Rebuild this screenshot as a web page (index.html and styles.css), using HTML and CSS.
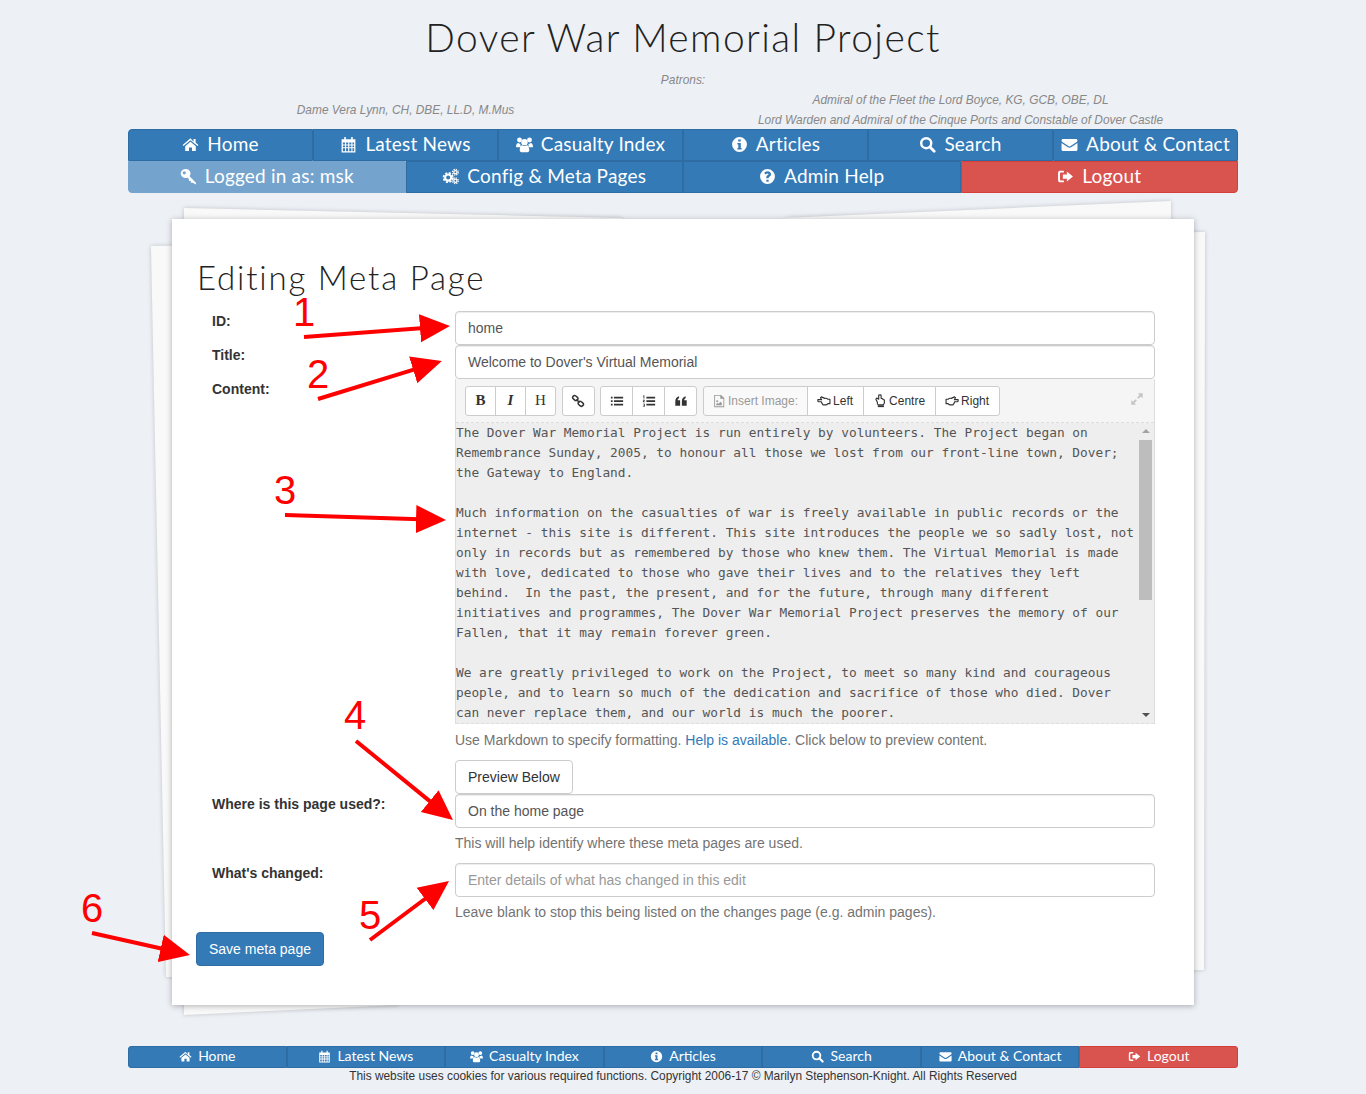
FILE: index.html
```html
<!DOCTYPE html>
<html lang="en">
<head>
    <meta charset="UTF-8">
    <meta name="viewport" content="width=device-width, initial-scale=1.0">
    <title>Dover War Memorial Project</title>
    <link rel="stylesheet" href="styles.css">
</head>
<body>
    <svg class="icon-defs" width="0" height="0">
        <symbol id="i-home" viewBox="0 0 16 16"><path d="M8 2.2.6 8.4l.8 1L8 3.900l6.600 5.500.8-1-2.600-2.200V2.800h-2v2.700zM3 9.600v4.600h3.600v-3.400h2.800v3.400H13V9.600L8 5.400z"/></symbol>
        <symbol id="i-calendar" viewBox="0 0 16 16"><path fill-rule="evenodd" d="M1.500 3H4V1h1.500v2h5V1H12v2h2.500v12.500h-13zM2.700 6.200v1.700h2V6.200zm3 0v1.700h2V6.200zm3 0v1.700h2V6.200zm3 0v1.700h1.600V6.200zM2.700 8.900v1.700h2V8.900zm3 0v1.700h2V8.900zm3 0v1.700h2V8.900zm3 0v1.700h1.600V8.900zM2.700 11.600v2.700h2v-2.700zm3 0v2.700h2v-2.700zm3 0v2.700h2v-2.700zm3 0v2.700h1.600v-2.700z"/></symbol>
        <symbol id="i-users" viewBox="0 0 16 16"><circle cx="3.300" cy="3.800" r="2.300"/><circle cx="12.700" cy="3.800" r="2.300"/><circle cx="8" cy="5.800" r="3"/><path d="M0 10.300C0 8 1 6.700 2.100 6.700c.6.500 1.300.8 2.200.7-.3 1.100-.2 2.200.4 3.200H1.200C.5 10.600 0 10.500 0 10.300zM16 10.300c0-2.300-1-3.600-2.100-3.600-.6.500-1.300.8-2.200.7.3 1.100.2 2.200-.4 3.200h3.500c.7 0 1.200-.1 1.200-.3zM3.500 13.500c0-3.200 1-4.900 2.500-4.900.6.500 1.200.9 2 .9s1.400-.4 2-.9c1.500 0 2.500 1.700 2.500 4.900 0 1-.7 1.700-1.700 1.700H5.200c-1 0-1.700-.7-1.700-1.700z"/></symbol>
        <symbol id="i-info" viewBox="0 0 16 16"><path fill-rule="evenodd" d="M8 1a7 7 0 1 0 0 14A7 7 0 0 0 8 1zM6.800 3.200h2.400v2H6.800zM6 6.500h3.200v4.700h.8v1.500H6v-1.500h.9V8H6z"/></symbol>
        <symbol id="i-search" viewBox="0 0 16 16"><circle cx="6.800" cy="6.800" r="4.700" fill="none" stroke="currentColor" stroke-width="2.300"/><path d="M10.300 10.300l4 4" stroke="currentColor" stroke-width="2.600" stroke-linecap="round"/></symbol>
        <symbol id="i-envelope" viewBox="0 0 16 16"><path d="M.5 4.200c0-.8.6-1.400 1.400-1.400h12.200c.8 0 1.400.6 1.400 1.400 0 .7-.5 1.300-1.100 1.700L8.700 9.600c-.4.300-1 .3-1.400 0L1.600 5.900C1 5.500.5 4.900.5 4.200zM.5 6.700v6.100c0 .8.600 1.400 1.400 1.400h12.200c.8 0 1.400-.6 1.400-1.400V6.700l-6 4c-.9.600-2.100.6-3 0z"/></symbol>
        <symbol id="i-key" viewBox="0 0 16 16"><path fill-rule="evenodd" d="M5 1a4.200 4.200 0 1 0 1.900 7.900l1.500 1.500v1.800h1.800v1.600h1.700L15 15.500v-1.700l-6-6.100A4.200 4.200 0 0 0 5 1zM4 3a1.500 1.500 0 1 1 0 3 1.500 1.500 0 0 1 0-3z"/></symbol>
        <symbol id="i-cogs" viewBox="0 0 16 16"><circle cx="5.800" cy="9" r="2.900" fill="none" stroke="currentColor" stroke-width="2"/><circle cx="5.800" cy="9" r="4.400" fill="none" stroke="currentColor" stroke-width="1.600" stroke-dasharray="2 1.460"/><circle cx="12.600" cy="4" r="1.500" fill="none" stroke="currentColor" stroke-width="1.200"/><circle cx="12.600" cy="4" r="2.700" fill="none" stroke="currentColor" stroke-width="1.200" stroke-dasharray="1.200 .920"/><circle cx="12.600" cy="12" r="1.500" fill="none" stroke="currentColor" stroke-width="1.200"/><circle cx="12.600" cy="12" r="2.700" fill="none" stroke="currentColor" stroke-width="1.200" stroke-dasharray="1.200 .920"/></symbol>
        <symbol id="i-question" viewBox="0 0 16 16"><path fill-rule="evenodd" d="M8 1a7 7 0 1 0 0 14A7 7 0 0 0 8 1zM6.900 11h2.200v2H6.900zM8 3c1.900 0 3.300 1.100 3.300 2.800 0 1.300-.8 1.900-1.500 2.400-.5.300-.7.600-.7 1.100v.4H6.900V9c0-1.200.6-1.800 1.300-2.300.5-.3.800-.5.800-.9S8.600 5.100 8 5.100c-.6 0-1.100.3-1.600.9L4.900 4.800C5.700 3.700 6.700 3 8 3z"/></symbol>
        <symbol id="i-logout" viewBox="0 0 16 16"><path d="M1 4.500C1 3.100 2 2.500 3 2.500h3.500v1.800H3.500c-.4 0-.7.300-.7.700v6c0 .4.300.7.700.7h3v1.800H3c-1 0-2-.6-2-2z"/><path d="M9.300 3.300 15 8l-5.700 4.700V10H5.500V6h3.800z"/></symbol>
        <symbol id="i-link" viewBox="0 0 16 16"><g fill="none" stroke="currentColor" stroke-width="1.700"><rect x="1.700" y="2.400" width="6.400" height="4.400" rx="2.200" transform="rotate(40 4.900 4.600)"/><rect x="8" y="9" width="6.400" height="4.400" rx="2.200" transform="rotate(40 11.200 11.200)"/><path d="M6.200 6.200l3.600 3.600"/></g></symbol>
        <symbol id="i-list-ul" viewBox="0 0 16 16"><path d="M1 3h2v2H1zM1 7h2v2H1zM1 11h2v2H1zM4.500 3H15v2H4.500zM4.500 7H15v2H4.500zM4.500 11H15v2H4.500z"/></symbol>
        <symbol id="i-list-ol" viewBox="0 0 16 16"><path d="M5 3h10v2H5zM5 7h10v2H5zM5 11h10v2H5zM1.500 1.500h1.200v3.600h-1v-2.600h-.2zM1 6.600h2.200v.8l-1.200 1.200h1.200v.8H1v-.8l1.200-1.200H1zM1 11h2.200v3.600H1v-.7h1.300v-.7H1.500v-.6h.8v-.8H1z"/></symbol>
        <symbol id="i-quote" viewBox="0 0 16 16"><path d="M7 13.500H1.500V8.600c0-3 1.500-5.100 4.300-5.900v2.200C4.700 5.400 4.200 6 4.200 7.200H7zM14.500 13.500H9V8.600c0-3 1.500-5.100 4.300-5.900v2.200c-1.100.5-1.600 1.100-1.600 2.300h2.800z"/></symbol>
        <symbol id="i-picture" viewBox="0 0 16 16"><path fill-rule="evenodd" d="M2.500 1h7.800L14 4.700V15H2.500zm1 1v12h9.500V5.500H9.500V2zM6 7a1.200 1.200 0 1 1 0 2.400A1.200 1.200 0 0 1 6 7zm-1.200 5.800v-1.300l1.500-1.200 1.200.9 2.300-2.400 1.500 1.700v2.300z"/></symbol>
        <symbol id="i-hand-left" viewBox="0 0 16 16"><path fill="none" stroke="currentColor" stroke-width="1.300" stroke-linejoin="round" d="M1 6.500h4.300L4 4.300l1.200-1L8.800 5c1.500-.3 3 .2 3.500 1h2.500v5h-2.300c-.7.900-1.300 1.500-2.500 1.500H7.400c-.7 0-1.100-.5-1-1.200-.7-.1-1-.7-.8-1.300-.5-.2-.7-.7-.6-1.200H1.900C1.300 8.800 1 8.300 1 7.700z"/></symbol>
        <symbol id="i-hand-down" viewBox="0 0 16 16"><path fill="none" stroke="currentColor" stroke-width="1.300" stroke-linejoin="round" d="M6.500 1.200v4.800L4.300 4.700l-1 1.200L5 9.500c-.3 1.300.2 2.600 1 3h5.500c.8-.6 1.500-1.400 1.500-2.400V7.400c0-.7-.5-1.100-1.200-1-.1-.7-.7-1-1.300-.8-.2-.5-.7-.7-1.200-.6V1.900c0-.6-.5-.9-1.100-.9z"/><path d="M5.500 13h7v2h-7z"/></symbol>
        <symbol id="i-hand-right" viewBox="0 0 16 16"><path fill="none" stroke="currentColor" stroke-width="1.300" stroke-linejoin="round" d="M15 6.500h-4.300L12 4.300l-1.200-1L7.200 5c-1.500-.3-3 .2-3.500 1H1.200v5h2.300c.7.900 1.300 1.500 2.500 1.500h2.600c.7 0 1.100-.5 1-1.200.7-.1 1-.7.8-1.300.5-.2.700-.7.600-1.200h3.100c.6 0 .900-.5.900-1.100z"/></symbol>
        <symbol id="i-expand" viewBox="0 0 16 16"><path d="M9 1.500h5.500V7l-2-2-2.800 2.800-1.500-1.500L11 3.500zM7 14.500H1.500V9l2 2 2.800-2.800 1.500 1.500L5 12.500z"/></symbol>
    </svg>

    <div class="page">
        <h1 class="site-title">Dover War Memorial Project</h1>
        <p class="patrons-label">Patrons:</p>
        <div class="patrons">
            <p>Dame Vera Lynn, CH, DBE, LL.D, M.Mus</p>
            <p>Admiral of the Fleet the Lord Boyce, KG, GCB, OBE, DL<br>Lord Warden and Admiral of the Cinque Ports and Constable of Dover Castle</p>
        </div>

        <nav class="main-nav">
            <div class="nav-row">
                <a class="nav-btn"><svg class="ic"><use href="#i-home"/></svg>Home</a>
                <a class="nav-btn"><svg class="ic"><use href="#i-calendar"/></svg>Latest News</a>
                <a class="nav-btn"><svg class="ic"><use href="#i-users"/></svg>Casualty Index</a>
                <a class="nav-btn"><svg class="ic"><use href="#i-info"/></svg>Articles</a>
                <a class="nav-btn"><svg class="ic"><use href="#i-search"/></svg>Search</a>
                <a class="nav-btn"><svg class="ic"><use href="#i-envelope"/></svg>About &amp; Contact</a>
            </div>
            <div class="nav-row">
                <a class="nav-btn nav-muted"><svg class="ic"><use href="#i-key"/></svg>Logged in as: msk</a>
                <a class="nav-btn"><svg class="ic"><use href="#i-cogs"/></svg>Config &amp; Meta Pages</a>
                <a class="nav-btn"><svg class="ic"><use href="#i-question"/></svg>Admin Help</a>
                <a class="nav-btn nav-danger"><svg class="ic"><use href="#i-logout"/></svg>Logout</a>
            </div>
        </nav>

        <main class="card">
            <svg class="sheets" width="1100" height="860" viewBox="0 0 1100 860">
                <polygon points="5,45 1059,31 1058,769 20,776"/>
                <polygon points="38,7 476,17 252,804 38,814"/>
                <polygon points="1025,0 1025,99 637,17"/>
            </svg>

            <h2 class="card-title">Editing Meta Page</h2>

            <form>
                <div class="form-row">
                    <label>ID:</label>
                    <input class="text-input" type="text" value="home">
                </div>
                <div class="form-row">
                    <label>Title:</label>
                    <input class="text-input" type="text" value="Welcome to Dover's Virtual Memorial">
                </div>
                <div class="form-row">
                    <label>Content:</label>
                    <div>
                        <div class="editor">
                            <div class="toolbar">
                                <div class="tool-group">
                                    <button type="button" class="tool-btn serif"><b>B</b></button>
                                    <button type="button" class="tool-btn serif"><b><i>I</i></b></button>
                                    <button type="button" class="tool-btn serif">H</button>
                                </div>
                                <div class="tool-group">
                                    <button type="button" class="tool-btn tool-icon"><svg class="ic-sm"><use href="#i-link"/></svg></button>
                                </div>
                                <div class="tool-group">
                                    <button type="button" class="tool-btn tool-icon"><svg class="ic-sm"><use href="#i-list-ul"/></svg></button>
                                    <button type="button" class="tool-btn tool-icon"><svg class="ic-sm"><use href="#i-list-ol"/></svg></button>
                                    <button type="button" class="tool-btn tool-icon"><svg class="ic-sm"><use href="#i-quote"/></svg></button>
                                </div>
                                <div class="tool-group">
                                    <span class="tool-btn tool-disabled"><svg class="ic-sm"><use href="#i-picture"/></svg>Insert Image:</span>
                                    <button type="button" class="tool-btn"><svg class="ic-sm"><use href="#i-hand-left"/></svg>Left</button>
                                    <button type="button" class="tool-btn"><svg class="ic-sm"><use href="#i-hand-down"/></svg>Centre</button>
                                    <button type="button" class="tool-btn"><svg class="ic-sm"><use href="#i-hand-right"/></svg>Right</button>
                                </div>
                                <svg class="expand"><use href="#i-expand"/></svg>
                            </div>
                            <div class="editor-body">
<pre class="editor-text">The Dover War Memorial Project is run entirely by volunteers. The Project began on
Remembrance Sunday, 2005, to honour all those we lost from our front-line town, Dover;
the Gateway to England.

Much information on the casualties of war is freely available in public records or the
internet - this site is different. This site introduces the people we so sadly lost, not
only in records but as remembered by those who knew them. The Virtual Memorial is made
with love, dedicated to those who gave their lives and to the relatives they left
behind.  In the past, the present, and for the future, through many different
initiatives and programmes, The Dover War Memorial Project preserves the memory of our
Fallen, that it may remain forever green.

We are greatly privileged to work on the Project, to meet so many kind and courageous
people, and to learn so much of the dedication and sacrifice of those who died. Dover
can never replace them, and our world is much the poorer.</pre>
                                <div class="scrollbar">
                                    <span class="arrow-up"></span>
                                    <div class="scroll-track"><div class="scroll-thumb"></div></div>
                                    <span class="arrow-down"></span>
                                </div>
                            </div>
                        </div>
                        <p class="help first-help">Use Markdown to specify formatting. <a href="#">Help is available.</a> Click below to preview content.</p>
                        <button type="button" class="btn-default">Preview Below</button>
                    </div>
                </div>
                <div class="form-row">
                    <label>Where is this page used?:</label>
                    <div>
                        <input class="text-input" type="text" value="On the home page">
                        <p class="help">This will help identify where these meta pages are used.</p>
                    </div>
                </div>
                <div class="form-row">
                    <label>What's changed:</label>
                    <div>
                        <input class="text-input" type="text" placeholder="Enter details of what has changed in this edit">
                        <p class="help">Leave blank to stop this being listed on the changes page (e.g. admin pages).</p>
                    </div>
                </div>
                <button type="button" class="btn-primary">Save meta page</button>
            </form>
        </main>

        <nav class="foot-nav">
            <a class="nav-btn"><svg class="ic"><use href="#i-home"/></svg>Home</a>
            <a class="nav-btn"><svg class="ic"><use href="#i-calendar"/></svg>Latest News</a>
            <a class="nav-btn"><svg class="ic"><use href="#i-users"/></svg>Casualty Index</a>
            <a class="nav-btn"><svg class="ic"><use href="#i-info"/></svg>Articles</a>
            <a class="nav-btn"><svg class="ic"><use href="#i-search"/></svg>Search</a>
            <a class="nav-btn"><svg class="ic"><use href="#i-envelope"/></svg>About &amp; Contact</a>
            <a class="nav-btn nav-danger"><svg class="ic"><use href="#i-logout"/></svg>Logout</a>
        </nav>
        <p class="copyright">This website uses cookies for various required functions. Copyright 2006-17 © Marilyn Stephenson-Knight. All Rights Reserved</p>
    </div>

    <!-- red notes drawn on top of the screenshot -->
    <svg class="notes" width="1366" height="1094" viewBox="0 0 1366 1094">
        <defs>
            <marker id="head" markerUnits="userSpaceOnUse" markerWidth="30" markerHeight="30" refX="4" refY="15" orient="auto">
                <path d="M0 1 30 15 0 29z" fill="#f00"/>
            </marker>
        </defs>
        <g class="note-lines">
            <line x1="304" y1="337" x2="424" y2="328" marker-end="url(#head)"/>
            <line x1="318" y1="399" x2="417" y2="368.600" marker-end="url(#head)"/>
            <line x1="285" y1="515" x2="420" y2="519.200" marker-end="url(#head)"/>
            <line x1="356" y1="741" x2="432.800" y2="803.600" marker-end="url(#head)"/>
            <line x1="370" y1="940" x2="428.200" y2="896.500" marker-end="url(#head)"/>
            <line x1="92" y1="933" x2="164.600" y2="949.300" marker-end="url(#head)"/>
        </g>
        <g class="note-nums">
            <text x="304" y="326">1</text>
            <text x="318" y="388">2</text>
            <text x="285" y="504">3</text>
            <text x="355" y="729">4</text>
            <text x="370" y="929">5</text>
            <text x="92" y="922">6</text>
        </g>
    </svg>
</body>
</html>
```

FILE: styles.css
```css
* {
    box-sizing: border-box;
}

body {
    margin: 0;
    background-color: #edf0f5;
    color: #333;
    font-family: "Liberation Sans", Arial, sans-serif;
    font-size: 14px;
    line-height: 20px;
    position: relative;
    height: 1094px;
    overflow: hidden;
}

.icon-defs {
    position: absolute;
}

.page {
    position: relative;
    z-index: 0;
    width: 1110px;
    margin: 0 auto;
}

.site-title {
    margin: 0;
    padding-top: 17px;
    height: 70px;
    line-height: 40px;
    font-family: Lato, sans-serif;
    font-weight: 300;
    font-size: 39px;
    letter-spacing: 1.4px;
    text-align: center;
    color: #222;
}

.patrons-label {
    margin: 0;
    font-size: 11.9px;
    font-style: italic;
    color: #888;
    text-align: center;
}

.patrons {
    display: grid;
    grid-template-columns: 1fr 1fr;
    align-items: center;
    font-size: 11.9px;
    font-style: italic;
    color: #888;
    text-align: center;
    height: 40px;
    margin-bottom: -1px;
}

.patrons p {
    margin: 0;
}

/* nav bars */
.nav-row,
.foot-nav {
    display: flex;
}

.nav-btn {
    flex: 1 1 0;
    display: flex;
    align-items: center;
    justify-content: center;
    background-color: #337ab7;
    border: 1px solid #2e6da4;
    color: #fff;
    font-family: Lato, sans-serif;
    white-space: nowrap;
}

.main-nav .nav-btn {
    height: 32px;
    padding-bottom: 2px;
    font-size: 19px;
    letter-spacing: .2px;
}

.main-nav .nav-row:first-child .nav-btn:first-child {
    border-top-left-radius: 4px;
}

.main-nav .nav-row:first-child .nav-btn:last-child {
    border-top-right-radius: 4px;
}

.main-nav .nav-row:last-child .nav-btn:first-child {
    border-bottom-left-radius: 4px;
}

.main-nav .nav-row:last-child .nav-btn:last-child {
    border-bottom-right-radius: 4px;
}

.nav-muted {
    background-color: #74a3cd;
    border-color: #74a3cd;
}

.nav-btn.nav-danger {
    background-color: #d9534f;
    border-color: #d43f3a;
}

.ic {
    width: 17px;
    height: 17px;
    margin-right: 8px;
    fill: currentColor;
}

/* card and the sheets of paper behind it */
.card {
    position: relative;
    width: 1022px;
    height: 786px;
    margin: 26px auto 41px;
    padding: 39px 25px 0;
    background-color: #fff;
    box-shadow: 0 1px 6px rgba(0, 0, 0, .3);
}

.sheets {
    position: absolute;
    top: -18px;
    left: -26px;
    z-index: -1;
    fill: #f9f9f9;
    filter: drop-shadow(0 0 2px rgba(0, 0, 0, .2));
}

.card-title {
    margin: 0 0 13px;
    height: 40px;
    line-height: 38px;
    font-family: Lato, sans-serif;
    font-weight: 300;
    font-size: 33px;
    letter-spacing: 1.8px;
    color: #222;
}

.form-row {
    display: grid;
    grid-template-columns: 258px 700px;
}

.form-row label {
    padding-left: 15px;
    font-weight: bold;
}

.text-input {
    display: block;
    width: 100%;
    height: 34px;
    padding: 6px 12px;
    border: 1px solid #ccc;
    border-radius: 4px;
    background-color: #fff;
    box-shadow: inset 0 1px 1px rgba(0, 0, 0, .075);
    color: #555;
    font-family: inherit;
    font-size: 14px;
}

.text-input::placeholder {
    color: #999;
}

/* markdown editor */
.editor {
    border: 1px solid #ddd;
    border-top: 0;
    border-bottom: 0;
}

.toolbar {
    display: flex;
    align-items: center;
    gap: 5.5px;
    height: 44px;
    padding: 0 9px;
    background-color: #f5f5f5;
    border-bottom: 1px dashed #ddd;
}

.tool-group {
    display: flex;
    height: 30px;
}

.tool-btn {
    display: flex;
    align-items: center;
    padding: 0 9.5px;
    margin-left: -1px;
    background-color: #fff;
    border: 1px solid #ccc;
    color: #333;
    font-family: inherit;
    font-size: 12px;
}

.tool-group .tool-btn:first-child {
    margin-left: 0;
    border-radius: 3px 0 0 3px;
}

.tool-group .tool-btn:last-child {
    border-radius: 0 3px 3px 0;
}

.tool-group .tool-btn:only-child {
    border-radius: 3px;
}

.tool-btn.serif {
    font-family: "Liberation Serif", serif;
    font-size: 15px;
    width: 31px;
    justify-content: center;
}

.tool-btn.tool-icon {
    width: 33px;
    padding: 0;
    justify-content: center;
}

.tool-btn.tool-disabled {
    padding: 0 8.5px;
    background-color: #f9f9f9;
    color: #999;
}

.ic-sm {
    width: 14px;
    height: 14px;
    margin-right: 2px;
    fill: currentColor;
    flex: none;
}

.tool-icon .ic-sm {
    margin: 0;
}

.expand {
    width: 14px;
    height: 14px;
    margin-left: auto;
    margin-right: 1px;
    margin-top: -4px;
    fill: #c4c4c4;
}

.editor-body {
    display: flex;
    height: 301px;
    background-color: #eee;
    border-bottom: 1px dashed #ddd;
    overflow: hidden;
}

.editor-text {
    flex: 1;
    margin: 0;
    overflow: hidden;
    font-family: "DejaVu Sans Mono", monospace;
    font-size: 12.8px;
    line-height: 20px;
    color: #555;
}

.scrollbar {
    width: 15px;
    margin-right: 1px;
    display: flex;
    flex-direction: column;
    align-items: center;
    background-color: #eee;
}

.arrow-up,
.arrow-down {
    flex: none;
    width: 0;
    height: 0;
    border-left: 4px solid transparent;
    border-right: 4px solid transparent;
}

.arrow-up {
    margin: 6px 0 7px;
    border-bottom: 4px solid #a3a3a3;
}

.arrow-down {
    margin: 7px 0 6px;
    border-top: 4px solid #505050;
}

.scroll-track {
    flex: 1;
    width: 13px;
}

.scroll-thumb {
    height: 160px;
    background-color: #bdbdbd;
}

.help {
    margin: 5px 0 10px;
    color: #737373;
}

.help.first-help {
    margin-top: 6px;
}

.help a {
    color: #337ab7;
    text-decoration: none;
}

.btn-default,
.btn-primary {
    display: block;
    height: 34px;
    padding: 6px 12px;
    border: 1px solid #ccc;
    border-radius: 4px;
    background-color: #fff;
    color: #333;
    font-family: inherit;
    font-size: 14px;
}

.btn-primary {
    margin-left: -1px;
    background-color: #337ab7;
    border-color: #2e6da4;
    color: #fff;
}

/* footer */
.foot-nav .nav-btn {
    height: 22px;
    padding-bottom: 3px;
    font-size: 14px;
}

.foot-nav .ic {
    width: 13px;
    height: 13px;
    margin-right: 6px;
    margin-top: 2px;
}

.foot-nav .nav-btn:first-child {
    border-radius: 3px 0 0 3px;
}

.foot-nav .nav-btn:last-child {
    border-radius: 0 3px 3px 0;
}

.copyright {
    margin: 0;
    line-height: 16px;
    font-size: 11.9px;
    text-align: center;
}

/* annotations */
.notes {
    position: absolute;
    top: 0;
    left: 0;
    pointer-events: none;
}

.note-lines line {
    stroke: #f00;
    stroke-width: 4;
}

.note-nums text {
    fill: #f00;
    font-family: "Liberation Sans", Arial, sans-serif;
    font-size: 40px;
    text-anchor: middle;
}
```
